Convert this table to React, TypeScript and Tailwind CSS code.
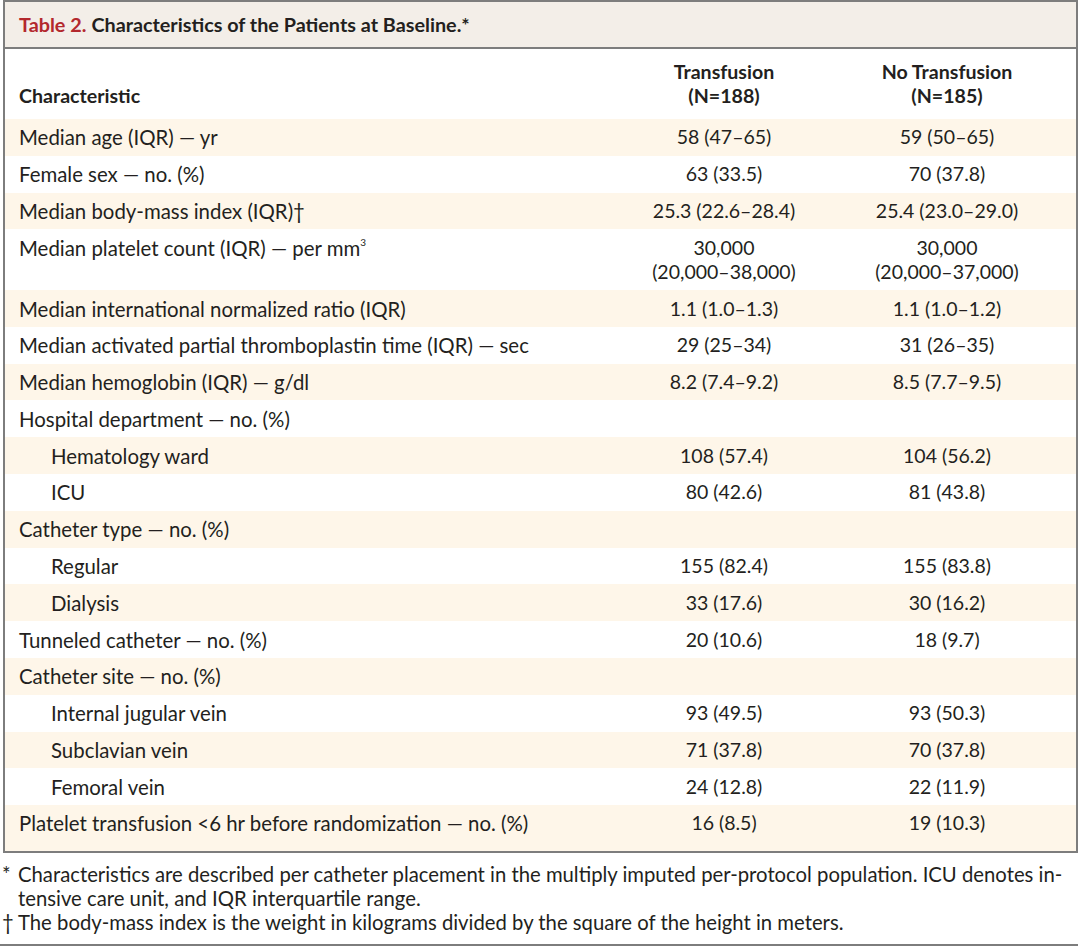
import React from "react";

type Row = { label: React.ReactNode; a?: React.ReactNode; b?: React.ReactNode; indent?: boolean; double?: boolean };

const rows: Row[] = [
  { label: "Median age (IQR) — yr", a: "58 (47–65)", b: "59 (50–65)" },
  { label: "Female sex — no. (%)", a: "63 (33.5)", b: "70 (37.8)" },
  { label: "Median body-mass index (IQR)†", a: "25.3 (22.6–28.4)", b: "25.4 (23.0–29.0)" },
  {
    label: (
      <>
        Median platelet count (IQR) — per mm<sup className="text-[10px] relative -top-[2px] align-super leading-none">3</sup>
      </>
    ),
    a: (
      <>
        30,000
        <br />
        (20,000–38,000)
      </>
    ),
    b: (
      <>
        30,000
        <br />
        (20,000–37,000)
      </>
    ),
    double: true,
  },
  { label: "Median international normalized ratio (IQR)", a: "1.1 (1.0–1.3)", b: "1.1 (1.0–1.2)" },
  { label: "Median activated partial thromboplastin time (IQR) — sec", a: "29 (25–34)", b: "31 (26–35)" },
  { label: "Median hemoglobin (IQR) — g/dl", a: "8.2 (7.4–9.2)", b: "8.5 (7.7–9.5)" },
  { label: "Hospital department — no. (%)" },
  { label: "Hematology ward", a: "108 (57.4)", b: "104 (56.2)", indent: true },
  { label: "ICU", a: "80 (42.6)", b: "81 (43.8)", indent: true },
  { label: "Catheter type — no. (%)" },
  { label: "Regular", a: "155 (82.4)", b: "155 (83.8)", indent: true },
  { label: "Dialysis", a: "33 (17.6)", b: "30 (16.2)", indent: true },
  { label: "Tunneled catheter — no. (%)", a: "20 (10.6)", b: "18 (9.7)" },
  { label: "Catheter site — no. (%)" },
  { label: "Internal jugular vein", a: "93 (49.5)", b: "93 (50.3)", indent: true },
  { label: "Subclavian vein", a: "71 (37.8)", b: "70 (37.8)", indent: true },
  { label: "Femoral vein", a: "24 (12.8)", b: "22 (11.9)", indent: true },
  { label: "Platelet transfusion <6 hr before randomization — no. (%)", a: "16 (8.5)", b: "19 (10.3)" },
];

export default function App() {
  return (
    <div
      className="w-[1080px] h-[949px] bg-white text-[#231f20] overflow-hidden"
      style={{ fontFamily: "Lato, 'Open Sans', sans-serif" }}
    >
      <div className="ml-[3px] w-[1075px] border-2 border-[#7d7d7d]">
        <div className="h-[47px] bg-[#f3eee8] border-b-2 border-[#7d7d7d] flex items-center pl-[14px] text-[19.8px] font-bold">
          <span className="text-[#b3282d]">Table 2.</span>
          <span className="ml-[5px]">Characteristics of the Patients at Baseline.*</span>
        </div>
        <div className="grid grid-cols-[1fr_220px_226px] pr-[16px] pt-[11px] pb-[11px] text-[19.6px] font-bold leading-[24px]">
          <div className="pl-[14px] self-end">Characteristic</div>
          <div className="text-center">
            Transfusion
            <br />
            (N=188)
          </div>
          <div className="text-center">
            No Transfusion
            <br />
            (N=185)
          </div>
        </div>
        {rows.map((r, i) => (
          <div
            key={i}
            className={`grid grid-cols-[1fr_220px_226px] pr-[16px] leading-[24px] pt-[6.4px] ${
              i === rows.length - 1 ? "pb-[15.4px]" : "pb-[6.4px]"
            } ${i % 2 === 0 ? "bg-[#fef6e9]" : "bg-white"}`}
          >
            <div className={`text-[20.4px] ${r.indent ? "pl-[46px]" : "pl-[14px]"}`}>{r.label}</div>
            <div className="text-center text-[19.5px]">{r.a}</div>
            <div className="text-center text-[19.5px]">{r.b}</div>
          </div>
        ))}
      </div>
      <div className="w-[1078px] border-b-2 border-[#7d7d7d] pt-[9px] pb-[10px] text-[20.3px] leading-[24px]">
        <div className="flex">
          <span className="w-[18px] shrink-0 pl-[2px]">*</span>
          <span className="whitespace-nowrap">
            Characteristics are described per catheter placement in the multiply imputed per-protocol population. ICU denotes in-
            <br />
            tensive care unit, and IQR interquartile range.
          </span>
        </div>
        <div className="flex">
          <span className="w-[18px] shrink-0 pl-[2px]">†</span>
          <span>The body-mass index is the weight in kilograms divided by the square of the height in meters.</span>
        </div>
      </div>
    </div>
  );
}
